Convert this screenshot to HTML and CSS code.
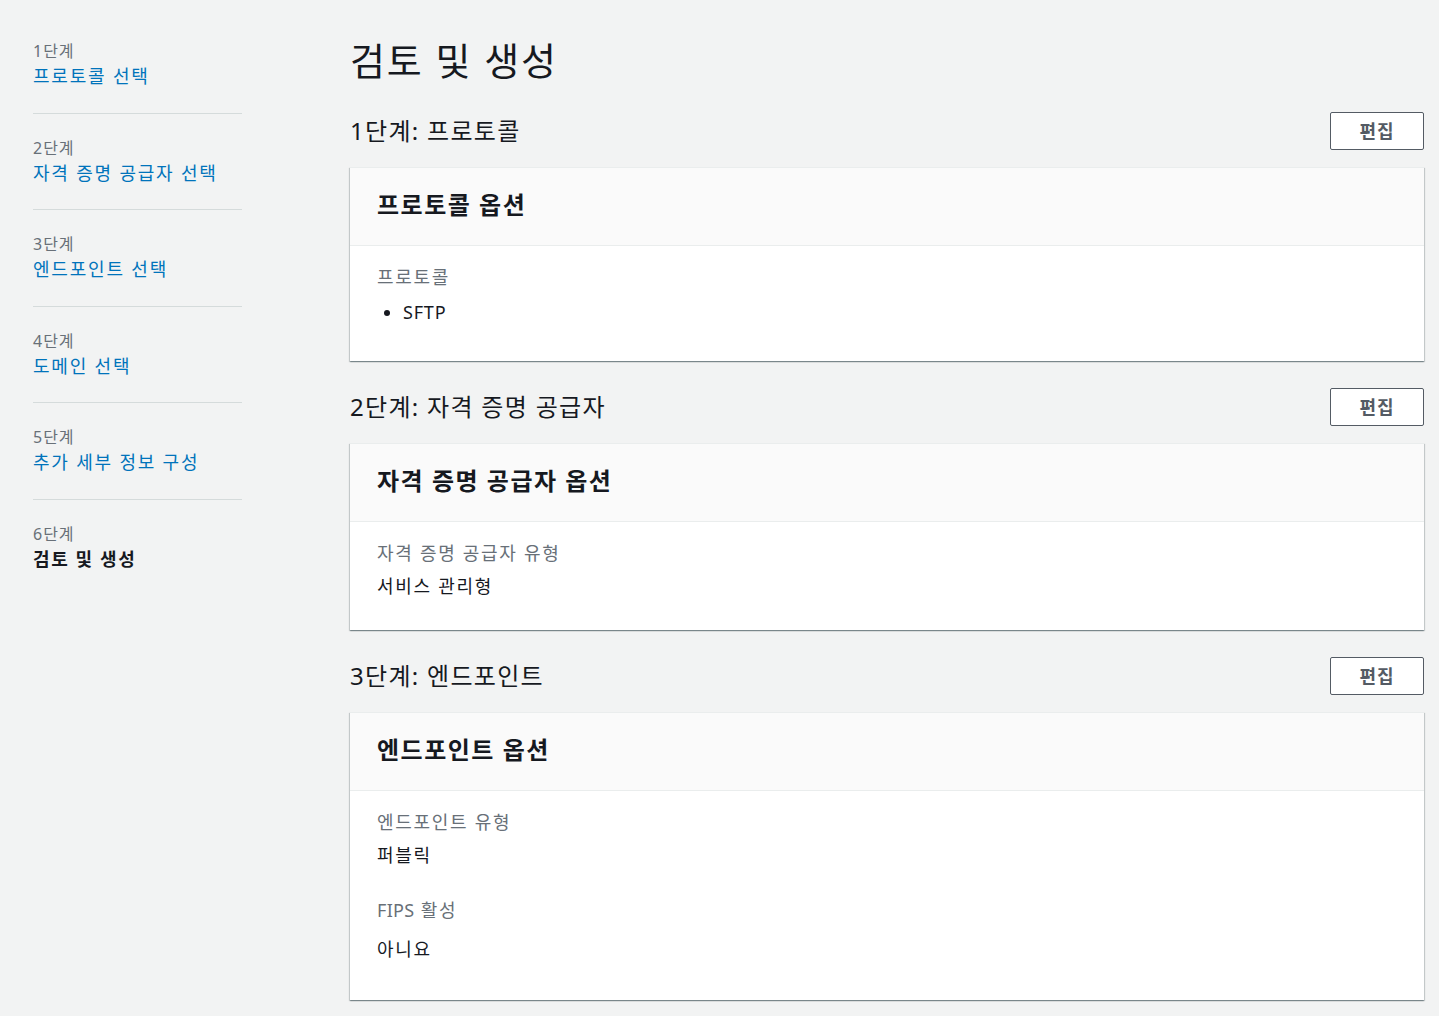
FILE: index.html
```html
<!DOCTYPE html>
<html lang="ko">
<head>
<meta charset="utf-8">
<title>검토 및 생성</title>
<link rel="stylesheet" href="styles.css">
</head>
<body>
<div class="layout">
  <nav class="steps">
    <div class="step">
      <div class="step-num">1단계</div>
      <a class="step-link" href="#">프로토콜 선택</a>
    </div>
    <div class="step">
      <div class="step-num">2단계</div>
      <a class="step-link" href="#">자격 증명 공급자 선택</a>
    </div>
    <div class="step">
      <div class="step-num">3단계</div>
      <a class="step-link" href="#">엔드포인트 선택</a>
    </div>
    <div class="step">
      <div class="step-num">4단계</div>
      <a class="step-link" href="#">도메인 선택</a>
    </div>
    <div class="step">
      <div class="step-num">5단계</div>
      <a class="step-link" href="#">추가 세부 정보 구성</a>
    </div>
    <div class="step step-last">
      <div class="step-num">6단계</div>
      <div class="step-current">검토 및 생성</div>
    </div>
  </nav>

  <main class="main">
    <h1 class="page-title">검토 및 생성</h1>

    <section class="section">
      <div class="section-head">
        <h2 class="section-title">1단계: 프로토콜</h2>
        <button class="btn">편집</button>
      </div>
      <div class="card">
        <div class="card-header"><h3 class="card-title">프로토콜 옵션</h3></div>
        <div class="card-body">
          <div class="kv">
            <div class="label">프로토콜</div>
            <ul class="value-list"><li>SFTP</li></ul>
          </div>
        </div>
      </div>
    </section>

    <section class="section">
      <div class="section-head">
        <h2 class="section-title">2단계: 자격 증명 공급자</h2>
        <button class="btn">편집</button>
      </div>
      <div class="card">
        <div class="card-header"><h3 class="card-title">자격 증명 공급자 옵션</h3></div>
        <div class="card-body">
          <div class="kv">
            <div class="label">자격 증명 공급자 유형</div>
            <div class="value">서비스 관리형</div>
          </div>
        </div>
      </div>
    </section>

    <section class="section">
      <div class="section-head">
        <h2 class="section-title">3단계: 엔드포인트</h2>
        <button class="btn">편집</button>
      </div>
      <div class="card">
        <div class="card-header"><h3 class="card-title">엔드포인트 옵션</h3></div>
        <div class="card-body">
          <div class="kv">
            <div class="label">엔드포인트 유형</div>
            <div class="value">퍼블릭</div>
          </div>
          <div class="kv kv-next">
            <div class="label"><span class="latin">FIPS</span> 활성</div>
            <div class="value value-loose">아니요</div>
          </div>
        </div>
      </div>
    </section>
  </main>
</div>
</body>
</html>
```

FILE: styles.css
```css
* { box-sizing: border-box; }

html, body {
  margin: 0;
  padding: 0;
  background: #f2f3f3;
  color: #16191f;
  font-family: "Noto Sans", "Noto Sans CJK KR", sans-serif;
}

.layout {
  display: flex;
  align-items: flex-start;
  padding: 0 15px 0 33px;
}

/* Sidebar */
.steps {
  width: 209px;
  flex: 0 0 209px;
  padding-top: 41px;
}

.step {
  padding: 0 0 21.5px 0;
  border-bottom: 1px solid #d5dbdb;
  margin-bottom: 24px;
}
.step-last { border-bottom: none; }

.step-num {
  font-size: 16px;
  line-height: 20px;
  letter-spacing: 1px;
  color: #687078;
}

.step-link {
  display: block;
  font-size: 18px;
  line-height: 30px;
  letter-spacing: 1.8px;
  color: #0073bb;
  text-decoration: none;
}

.step-current {
  font-size: 18px;
  line-height: 30px;
  letter-spacing: 1.6px;
  font-weight: 700;
  color: #16191f;
}

/* Main */
.main {
  flex: 1;
  margin-left: 108px;
  padding-top: 38px;
}

.page-title {
  margin: 0 0 30px 0;
  font-size: 38px;
  line-height: 44px;
  font-weight: 400;
  letter-spacing: 1.9px;
  color: #16191f;
}

.section { margin-bottom: 27px; }

.section-head {
  display: flex;
  align-items: center;
  justify-content: space-between;
  height: 38px;
  margin-bottom: 17px;
}

.section-title {
  margin: 0;
  font-size: 24px;
  line-height: 30px;
  font-weight: 400;
  letter-spacing: 1.3px;
  color: #16191f;
}

.btn {
  width: 94px;
  height: 38px;
  background: #ffffff;
  border: 1px solid #545b64;
  border-radius: 2px;
  color: #545b64;
  font-family: inherit;
  font-size: 18px;
  font-weight: 700;
  letter-spacing: 1px;
  padding: 0 0 2px 0;
  cursor: pointer;
}

.card {
  background: #ffffff;
  box-shadow: 0 1px 1px 0 rgba(0, 28, 36, 0.3),
              1px 1px 1px 0 rgba(0, 28, 36, 0.15),
              -1px 1px 1px 0 rgba(0, 28, 36, 0.15);
  border-top: 1px solid #eaeded;
}

.card-header {
  height: 78px;
  display: flex;
  align-items: center;
  padding: 0 27px 3px;
  background: #fafafa;
  border-bottom: 1px solid #eaeded;
}

.card-title {
  margin: 0;
  font-size: 24px;
  font-weight: 700;
  line-height: 30px;
  letter-spacing: 1.5px;
  color: #16191f;
}

.card-body {
  padding: 20px 27px 33px;
}

.label {
  font-size: 18px;
  line-height: 22px;
  letter-spacing: 1.7px;
  color: #687078;
}

.latin { letter-spacing: 0.3px; }

.value {
  font-size: 18px;
  line-height: 22px;
  letter-spacing: 1.7px;
  margin-top: 11px;
  color: #16191f;
}

.value-list {
  margin: 13px 0 5px 0;
  padding-left: 26px;
  font-size: 18px;
  line-height: 22px;
  letter-spacing: 0.8px;
  color: #16191f;
}

.kv-next { margin-top: 33px; }

.value-loose {
  margin-top: 17px;
  margin-bottom: 7px;
}
```
